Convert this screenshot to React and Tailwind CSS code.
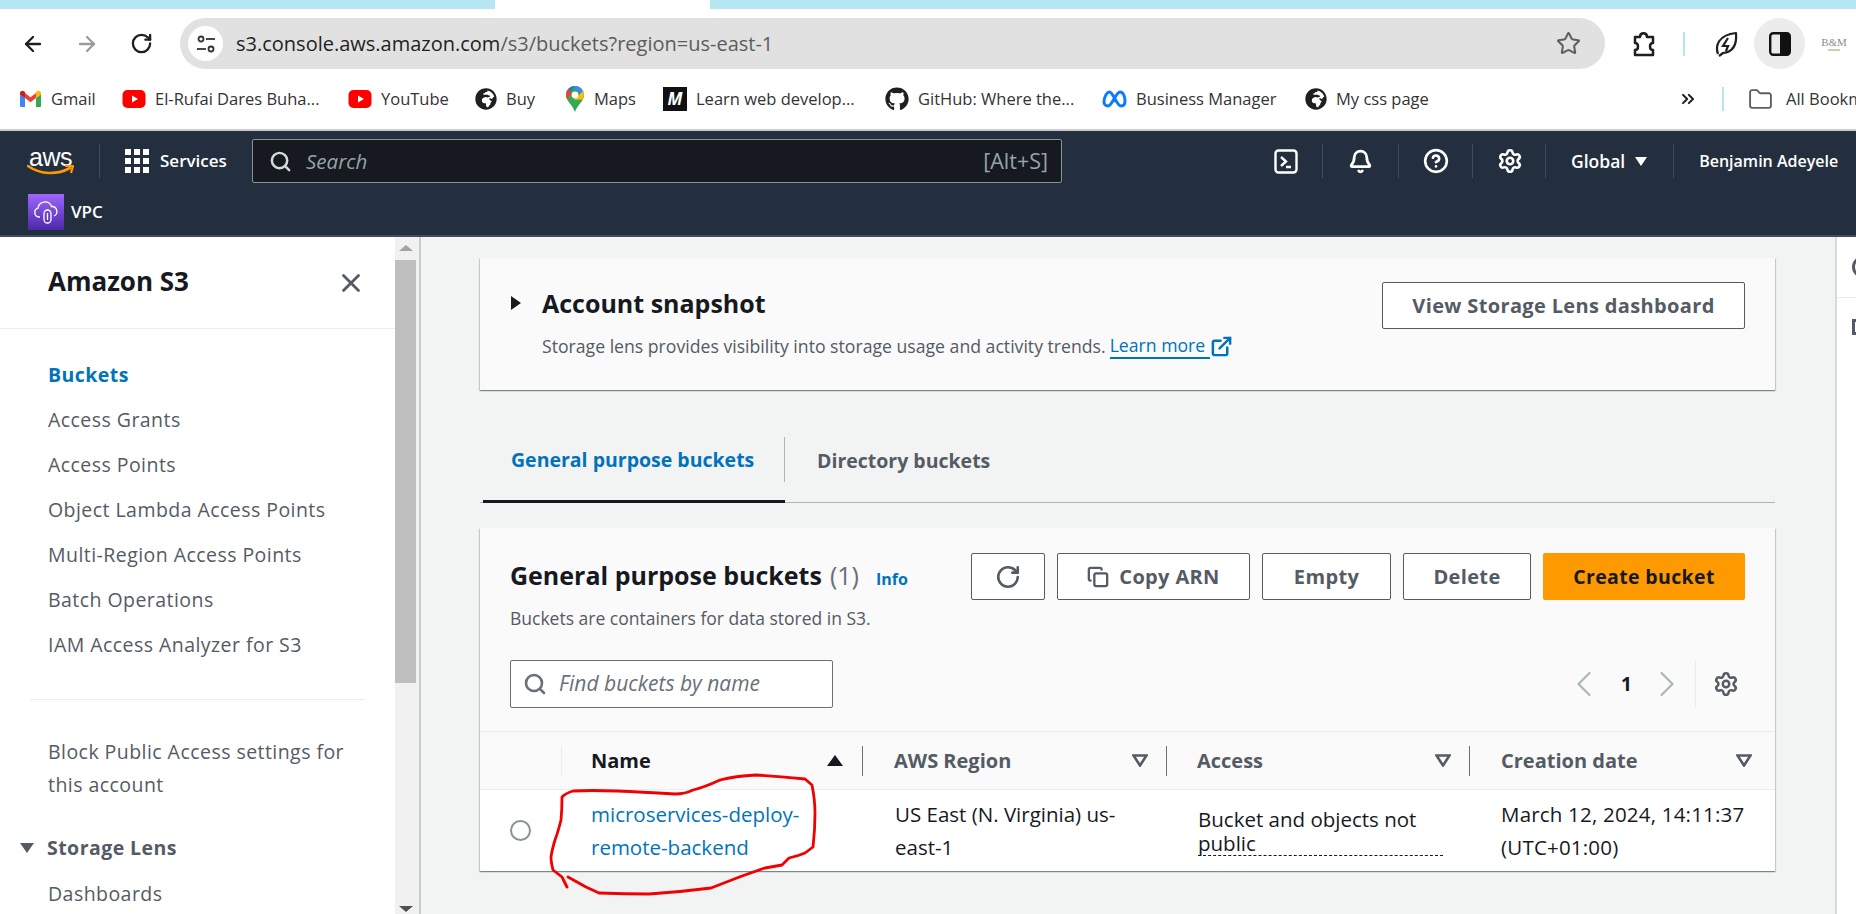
import React from "react";
import { ArrowLeft, ArrowRight, RotateCw, Star, Folder, ChevronsRight, Search, X, Copy, ChevronLeft, ChevronRight, Settings, CircleHelp, Bell, ExternalLink } from "lucide-react";
import { FaGithub, FaGlobeAfrica } from "react-icons/fa";

const Gmail = () => (
  <svg width="23" height="18" viewBox="0 0 23 18">
    <path d="M1 17V4l5 4v9H2a1 1 0 0 1-1-1z" fill="#4285f4" />
    <path d="M22 17V4l-5 4v9h4a1 1 0 0 0 1-1z" fill="#34a853" />
    <path d="M6 8v-5l5.500 4.200L17 3v5l-5.500 4.200z" fill="#ea4335" />
    <path d="M1 4.500V3c0-2 2.500-3 4-1.800L6 2v6z" fill="#c5221f" />
    <path d="M22 4.500V3c0-2-2.500-3-4-1.800L17 2v6z" fill="#fbbc04" />
  </svg>
);
const Yt = () => (
  <svg width="24" height="24" viewBox="0 0 24 24">
    <rect x="0.500" y="3" width="23" height="18" rx="5" fill="#f00" />
    <path d="M10 8.500l6 3.500-6 3.500z" fill="#fff" />
  </svg>
);
const Maps = () => (
  <svg width="20" height="28" viewBox="0 0 20 28">
    <path d="M10 1a9 9 0 0 1 9 9c0 6-6 9-9 17C7 19 1 16 1 10a9 9 0 0 1 9-9z" fill="#34a853" />
    <path d="M3 4a9 9 0 0 1 7-3l-5 6z" fill="#1a73e8" />
    <path d="M10 1a9 9 0 0 1 8 5l-5 4a3.500 3.500 0 0 0-3-5.500z" fill="#4285f4" />
    <path d="M1 10a9 9 0 0 1 2-6l4 4-5 6a8 8 0 0 1-1-4z" fill="#ea4335" />
    <path d="M18 6c1.500 3 1 6-.5 8.500L9 15l9-9z" fill="#fbbc04" />
    <circle cx="10" cy="10" r="3.400" fill="#fff" />
  </svg>
);
const Meta = () => (
  <svg width="26" height="18" viewBox="0 0 26 18" fill="none" stroke="#0a7cff" strokeWidth="3">
    <path d="M3 12c0-5 3-10 5.500-10C12 2 16 16 20 16c2.500 0 4-2 4-5 0-5-2-9-5-9-4 0-8 14-12 14-2.500 0-4-2-4-4z" />
  </svg>
);
const Bookmark = ({ w, ml, icon, children }) => (
  <div className="flex items-center shrink-0" style={{ width: w, marginLeft: ml }}>
    {icon}
    <span className="ml-[9px] whitespace-nowrap">{children}</span>
  </div>
);
const HeaderDivider = ({ ml }) => <div className="w-px h-[34px] bg-[#414d5c] shrink-0" style={{ marginLeft: ml }} />;
const NavItem = ({ children, active }) => (
  <div className={active ? "h-[45px] flex items-center text-[#0073bb] font-bold" : "h-[45px] flex items-center"}>{children}</div>
);
const Btn = ({ w, children, ml, className = "" }) => (
  <div className={"h-[47px] shrink-0 flex items-center justify-center gap-[10px] border border-[#545b64] rounded-[2px] bg-white text-[#545b64] font-bold text-[20px] tracking-[0.35px] " + className} style={{ width: w, marginLeft: ml }}>
    {children}
  </div>
);
const Filter = () => (
  <svg width="16" height="13" viewBox="0 0 16 13" className="shrink-0"><path d="M1.500 1.500h13L8 11.500z" fill="none" stroke="#545b64" strokeWidth="2.600" /></svg>
);
const Th = ({ w, children, last }) => (
  <div className="relative h-[30px] flex items-center justify-between shrink-0 text-[#545b64] font-bold text-[20px]" style={{ width: w }}>
    <span>{children}</span>
    <span className={last ? "pr-0" : "pr-[19px]"}><Filter /></span>
    {!last && <span className="absolute right-0 top-0 h-[30px] w-px bg-[#687078]" />}
  </div>
);

export default function App() {
  return (
    <div className="relative w-[1856px] h-[914px] overflow-hidden bg-white font-['Open_Sans',sans-serif] flex flex-col">
      {/* tab strip */}
      <div className="h-[9px] shrink-0 flex bg-[#b5e6f2]">
        <div className="w-[495px] shrink-0 rounded-br-[10px] bg-[#b5e6f2]" />
        <div className="w-[215px] shrink-0 bg-white" />
        <div className="flex-1 rounded-bl-[10px] bg-[#b5e6f2]" />
      </div>
      {/* toolbar */}
      <div className="h-[60px] shrink-0 flex items-end relative rounded-tl-[10px] bg-white">
        <div className="h-[51px] w-full flex items-center">
          <ArrowLeft size={24} strokeWidth={2.300} className="ml-[21px] text-[#1f1f1f] shrink-0" />
          <ArrowRight size={24} strokeWidth={2.300} className="ml-[30px] text-[#9b9b9b] shrink-0" />
          <RotateCw size={23} strokeWidth={2.400} className="ml-[31px] text-[#1f1f1f] shrink-0" />
          <div className="ml-[27px] w-[1425px] h-[51px] rounded-full bg-[#e1e1e1] flex items-center shrink-0">
            <div className="ml-[8px] w-[35px] h-[35px] rounded-full bg-white flex items-center justify-center shrink-0">
              <svg width="20" height="20" viewBox="0 0 20 20" fill="none" stroke="#333" strokeWidth="1.800">
                <circle cx="5" cy="5" r="2.500" /><path d="M10 5h9" />
                <circle cx="15" cy="15" r="2.500" /><path d="M1 15h9" />
              </svg>
            </div>
            <span className="ml-[13px] text-[20px] text-[#1f1f1f] whitespace-nowrap">s3.console.aws.amazon.com<span className="text-[#5c5c5c]">/s3/buckets?region=us-east-1</span></span>
            <Star size={25} strokeWidth={2} className="ml-auto mr-[24px] text-[#5f5f5f]" />
          </div>
          <svg width="26" height="26" viewBox="0 0 26 26" fill="none" stroke="#1f1f1f" strokeWidth="2.500" className="ml-[27px] shrink-0">
            <path d="M3 6h5c0-5 7-5 7 0h6v6c-4 0-4 7 0 7v5H3v-5c4 0 4-7 0-7z" strokeLinejoin="round" />
          </svg>
          <div className="ml-[25px] w-[2px] h-[24px] bg-[#b5e6f2] shrink-0" />
          <svg width="26" height="28" viewBox="0 0 26 28" fill="none" stroke="#1f1f1f" strokeWidth="2.200" className="ml-[28px] shrink-0">
            <path d="M5 24C2 16 5 5 23 3c1 12-3 19-13 20l-4 3" strokeLinejoin="round" />
            <path d="M15 8l-5 8h5l-2 5" />
          </svg>
          <div className="ml-[15px] w-[51px] h-[51px] rounded-full bg-[#ececec] flex items-center justify-center shrink-0">
            <svg width="22" height="24" viewBox="0 0 22 24"><rect x="1.200" y="1.200" width="19.600" height="21.600" rx="3" fill="none" stroke="#111" strokeWidth="2.400" /><rect x="11" y="2" width="9" height="20" fill="#111" /></svg>
          </div>
          <div className="ml-[16px] w-[26px] flex flex-col items-center shrink-0 leading-none">
            <span className="text-[11px] text-[#8a8a8a] whitespace-nowrap font-['Liberation_Serif',serif]">B&amp;M</span>
            <span className="mt-[1px] w-[12px] h-[2px] bg-[#d8c9a8]" />
          </div>
        </div>
      </div>
      {/* bookmarks */}
      <div className="h-[62px] shrink-0 flex items-center text-[16.500px] text-[#333] bg-white border-b-2 border-[#cccccc] overflow-hidden">
        <Bookmark w={77} ml={19} icon={<Gmail />}>Gmail</Bookmark>
        <Bookmark w={226} ml={26} icon={<Yt />}>El-Rufai Dares Buha...</Bookmark>
        <Bookmark w={102} ml={0} icon={<Yt />}>YouTube</Bookmark>
        <Bookmark w={61} ml={25} icon={<FaGlobeAfrica size={22} className="text-[#1f1f1f] shrink-0" />}>Buy</Bookmark>
        <Bookmark w={72} ml={29} icon={<Maps />}>Maps</Bookmark>
        <Bookmark w={197} ml={26} icon={<div className="w-[24px] h-[24px] bg-[#111] text-white italic font-bold text-[17px] leading-[24px] text-center shrink-0">M</div>}>Learn web develop...</Bookmark>
        <Bookmark w={193} ml={25} icon={<FaGithub size={24} className="text-[#1f1f1f] shrink-0" />}>GitHub: Where the...</Bookmark>
        <Bookmark w={178} ml={23} icon={<Meta />}>Business Manager</Bookmark>
        <Bookmark w={130} ml={26} icon={<FaGlobeAfrica size={22} className="text-[#1f1f1f] shrink-0" />}>My css page</Bookmark>
        <ChevronsRight size={20} strokeWidth={2.400} className="ml-[243px] text-[#1f1f1f] shrink-0" />
        <div className="ml-[24px] w-[2px] h-[24px] bg-[#b5e6f2] shrink-0" />
        <Folder size={25} strokeWidth={1.800} className="ml-[24px] text-[#5f5f5f] shrink-0" />
        <span className="ml-[13px] whitespace-nowrap">All Bookmarks</span>
      </div>
      {/* AWS header */}
      <div className="h-[106px] shrink-0 bg-[#232f3e] border-b-2 border-[#414d5c] text-white text-[17px]">
        <div className="h-[44px] mt-[8px] flex items-center">
          <div className="ml-[27px] w-[47px] h-[32px] relative shrink-0">
            <span className="block text-[25px] leading-[24px] tracking-[-0.500px] text-center font-['Liberation_Sans',sans-serif]">aws</span>
            <svg width="47" height="13" viewBox="0 0 47 13" className="absolute left-0 top-[19px]" fill="none">
              <path d="M1 2c13 9 29 9 42 2" stroke="#f90" strokeWidth="2.600" strokeLinecap="round" />
              <path d="M38 2h8l-2 7" stroke="#f90" strokeWidth="2.200" strokeLinejoin="round" />
            </svg>
          </div>
          <HeaderDivider ml={25} />
          <div className="ml-[25px] grid grid-cols-3 gap-[3px] shrink-0">
            {[0, 1, 2, 3, 4, 5, 6, 7, 8].map((i) => <span key={i} className="w-[6px] h-[6px] bg-white" />)}
          </div>
          <span className="ml-[11px] w-[67px] shrink-0 font-semibold whitespace-nowrap">Services</span>
          <div className="ml-[25px] w-[810px] h-[44px] shrink-0 bg-[#16191f] border border-[#879596] rounded-[2px] flex items-center">
            <Search size={23} strokeWidth={2.600} className="ml-[16px] text-[#d5dbdb]" />
            <span className="ml-[14px] italic text-[20.500px] text-[#95a5a6]">Search</span>
            <span className="ml-auto mr-[13px] text-[21.500px] text-[#95a5a6]">[Alt+S]</span>
          </div>
          <svg width="24" height="25" viewBox="0 0 24 25" fill="none" stroke="#fff" strokeWidth="2.400" className="ml-[212px] shrink-0">
            <rect x="1.500" y="1.500" width="21" height="22" rx="3" /><path d="M7 8l5 4.500-5 4.500M12 18h5" />
          </svg>
          <HeaderDivider ml={24} />
          <Bell size={25} strokeWidth={2.600} className="ml-[25px] shrink-0" />
          <HeaderDivider ml={25} />
          <CircleHelp size={26} strokeWidth={2.400} className="ml-[24px] shrink-0" />
          <HeaderDivider ml={23} />
          <Settings size={26} strokeWidth={2.400} className="ml-[24px] shrink-0" />
          <HeaderDivider ml={22} />
          <span className="ml-[25px] font-semibold text-[17.500px]">Global</span>
          <span className="ml-[10px] w-0 h-0 border-x-[6px] border-x-transparent border-t-[9px] border-t-white shrink-0" />
          <HeaderDivider ml={26} />
          <span className="ml-[25px] font-semibold text-[16px] whitespace-nowrap">Benjamin Adeyele</span>
        </div>
        <div className="mt-[11px] flex items-center">
          <div className="ml-[28px] w-[36px] h-[36px] bg-gradient-to-t from-[#4d27a8] to-[#a166ff] flex items-center justify-center shrink-0">
            <svg width="26" height="26" viewBox="0 0 26 26" fill="none" stroke="#fff" strokeWidth="1.300">
              <path d="M7 18H6a4.500 4.500 0 0 1-1-8.800A7 7 0 0 1 18.500 7.500 5 5 0 0 1 21 17" />
              <rect x="11" y="11" width="7" height="13" rx="3.500" /><path d="M14.500 14v7" />
            </svg>
          </div>
          <span className="ml-[7px] font-semibold">VPC</span>
        </div>
      </div>
      {/* body */}
      <div className="flex-1 min-h-0 flex">
        <aside className="w-[395px] shrink-0 bg-white text-[#545b64] text-[19.500px] tracking-[0.45px] overflow-hidden">
          <div className="h-[92px] flex items-center justify-between border-b border-[#eaeded]">
            <span className="ml-[48px] text-[#16191f] text-[26px] font-bold tracking-normal -mt-[2px]">Amazon S3</span>
            <X size={30} strokeWidth={2.200} className="mr-[29px]" />
          </div>
          <div className="pl-[48px] pt-[23px]">
            <NavItem active>Buckets</NavItem>
            <NavItem>Access Grants</NavItem>
            <NavItem>Access Points</NavItem>
            <NavItem>Object Lambda Access Points</NavItem>
            <NavItem>Multi-Region Access Points</NavItem>
            <NavItem>Batch Operations</NavItem>
            <NavItem>IAM Access Analyzer for S3</NavItem>
          </div>
          <div className="ml-[30px] w-[335px] h-px bg-[#eaeded] mt-[32px]" />
          <div className="ml-[48px] mt-[35px] leading-[33px] w-[320px]">Block Public Access settings for this account</div>
          <div className="mt-[30px] h-[33px] flex items-center font-bold">
            <span className="ml-[20px] w-0 h-0 border-x-[7px] border-x-transparent border-t-[10px] border-t-[#545b64]" />
            <span className="ml-[13px]">Storage Lens</span>
          </div>
          <div className="ml-[48px] mt-[13px] leading-[33px]">Dashboards</div>
        </aside>
        {/* scrollbar */}
        <div className="w-[26px] shrink-0 bg-[#f1f1f1] border-r-2 border-[#c9cccc] flex flex-col items-center pr-[3px]">
          <span className="mt-[8px] w-0 h-0 border-x-[7px] border-x-transparent border-b-[6px] border-b-[#a3a3a3]" />
          <div className="mt-[9px] w-[21px] h-[423px] bg-[#bfbfbf]" />
          <span className="mt-auto mb-[2px] w-0 h-0 border-x-[7px] border-x-transparent border-t-[6px] border-t-[#505050]" />
        </div>
        {/* main */}
        <main className="flex-1 min-w-0 bg-[#f2f3f3] pl-[59px] pr-[60px] pt-[21px] text-[#16191f]">
          <section className="h-[132px] bg-[#fafafa] shadow-[0_1px_1px_0_rgba(0,28,36,0.3),1px_1px_1px_0_rgba(0,28,36,0.15),-1px_1px_1px_0_rgba(0,28,36,0.15)] flex justify-between">
            <div className="flex">
              <span className="ml-[31px] mt-[38px] w-0 h-0 border-y-[7px] border-y-transparent border-l-[10px] border-l-[#16191f]" />
              <div className="ml-[21px] mt-[23px]">
                <div className="text-[25px] leading-[44px] font-bold">Account snapshot</div>
                <div className="mt-[8px] text-[17.650px] text-[#545b64] leading-[24px] whitespace-nowrap flex items-center">
                  <span>Storage lens provides visibility into storage usage and activity trends.</span>
                  <span className="ml-[4px] text-[#0073bb] border-b-2 border-[#0073bb]">Learn more&nbsp;</span>
                  <ExternalLink size={23} strokeWidth={2.600} className="text-[#0073bb]" />
                </div>
              </div>
            </div>
            <Btn w={363} className="mt-[24px] mr-[30px]">View Storage Lens dashboard</Btn>
          </section>
          <div className="h-[113px] border-b border-[#aab7b8] flex items-end">
            <div className="ml-[3px] w-[302px] h-[71px] border-b-[3px] border-[#16191f] text-[#0073bb] font-bold text-[19.500px] relative -mb-px flex items-center pl-[28px] pb-[12px]">
              General purpose buckets
              <span className="absolute right-0 top-[5px] h-[45px] w-px bg-[#aab7b8]" />
            </div>
            <div className="h-[71px] flex items-center pl-[32px] pb-[12px] text-[#545b64] font-bold text-[19.500px]">Directory buckets</div>
          </div>
          <section className="mt-[25px] bg-[#fafafa] shadow-[0_1px_1px_0_rgba(0,28,36,0.3),1px_1px_1px_0_rgba(0,28,36,0.15),-1px_1px_1px_0_rgba(0,28,36,0.15)]">
            <div className="h-[204px] border-b border-[#eaeded] pl-[30px] pr-[30px] pt-[25px]">
              <div className="flex items-start">
                <div className="w-[461px] shrink-0 flex items-baseline pt-[4px]">
                  <span className="text-[25px] font-bold whitespace-nowrap">General purpose buckets</span>
                  <span className="ml-[8px] text-[25px] text-[#687078]">(1)</span>
                  <span className="ml-[17px] text-[16px] font-bold text-[#0073bb]">Info</span>
                </div>
                <Btn w={74}><RotateCw size={26} strokeWidth={2.400} /></Btn>
                <Btn w={193} ml={12}><Copy size={22} strokeWidth={2.500} />Copy ARN</Btn>
                <Btn w={129} ml={12}>Empty</Btn>
                <Btn w={128} ml={12}>Delete</Btn>
                <div className="ml-[12px] w-[202px] h-[47px] shrink-0 flex items-center justify-center rounded-[2px] bg-[#ff9900] text-[#16191f] font-bold text-[19.500px] tracking-[0.35px]">Create bucket</div>
              </div>
              <div className="mt-[6px] text-[17.500px] leading-[24px] text-[#545b64]">Buckets are containers for data stored in S3.</div>
              <div className="mt-[30px] flex items-center">
                <div className="w-[323px] h-[48px] shrink-0 bg-white border border-[#687078] rounded-[2px] flex items-center">
                  <Search size={24} strokeWidth={2.600} className="ml-[12px] text-[#687078]" />
                  <span className="ml-[12px] italic text-[#687078] text-[21px] whitespace-nowrap">Find buckets by name</span>
                </div>
                <ChevronLeft size={44} strokeWidth={1.200} className="ml-[729px] text-[#aab7b8] shrink-0" />
                <span className="ml-[15px] w-[16px] font-bold text-[19px]">1</span>
                <ChevronRight size={44} strokeWidth={1.200} className="ml-[8px] text-[#aab7b8] shrink-0" />
                <span className="ml-[6px] w-px h-[48px] bg-[#eaeded] shrink-0" />
                <Settings size={26} strokeWidth={2.300} className="ml-[17px] text-[#545b64] shrink-0" />
              </div>
            </div>
            <div className="h-[58px] border-b border-[#eaeded] flex items-center">
              <span className="ml-[81px] w-px h-[30px] bg-[#eaeded]" />
              <div className="ml-[29px] w-[272px] h-[30px] relative flex items-center justify-between shrink-0 font-bold text-[20px]">
                <span>Name</span>
                <span className="mr-[20px] w-0 h-0 border-x-[8px] border-x-transparent border-b-[11px] border-b-[#16191f]" />
                <span className="absolute right-0 top-0 h-[30px] w-px bg-[#687078]" />
              </div>
              <div className="pl-[31px] flex">
                <Th w={273}>AWS Region</Th>
              </div>
              <div className="pl-[30px] flex">
                <Th w={273}>Access</Th>
              </div>
              <div className="pl-[31px] flex">
                <Th w={251} last>Creation date</Th>
              </div>
            </div>
            <div className="h-[81px] bg-white flex items-center text-[20.500px] leading-[33px]">
              <span className="ml-[30px] w-[21px] h-[21px] rounded-full border-2 border-[#879596] bg-white shrink-0" />
              <div className="ml-[60px] w-[304px] shrink-0 text-[#0073bb]">microservices-deploy-<br />remote-backend</div>
              <div className="w-[303px] shrink-0">US East (N. Virginia) us-<br />east-1</div>
              <div className="w-[303px] shrink-0">
                <span className="block w-[245px] leading-[24px] border-b border-dashed border-[#16191f] mt-[2px]">Bucket and objects not public</span>
              </div>
              <div className="whitespace-nowrap tracking-[0.2px]">March 12, 2024, 14:11:37<br />(UTC+01:00)</div>
            </div>
          </section>
        </main>
        {/* right rail */}
        <div className="w-[21px] shrink-0 bg-white border-l-2 border-[#d5dbdb] overflow-hidden">
          <div className="h-[61px] border-b border-[#eaeded] flex items-center pl-[15px]">
            <span className="w-[22px] h-[22px] shrink-0 rounded-full border-[3px] border-[#545b64]" />
          </div>
          <div className="mt-[21px] pl-[15px]"><span className="block w-[18px] h-[16px] border-[3px] border-[#545b64]" /></div>
        </div>
      </div>
      {/* red annotation */}
      <svg width="1856" height="914" viewBox="0 0 1856 914" className="absolute left-0 top-0 pointer-events-none" fill="none">
        <path d="M567 887L562 877L553 870C551 862 551 857 551 857C552 850 555 840 555 840C558 832 561 820 561 820C562 810 562 797 562 797C566 793 573 791 573 791C590 790 617 791 617 791C640 792 675 794 675 794C685 794 693 790 693 790C705 787 720 780 720 780C735 776 756 775 756 775C775 776 805 779 805 779L812 785C815 800 815 813 815 813C815 830 813 847 813 847L805 853C798 856 789 858 789 858L782 865L765 868L742 876L711 888C680 892 649 894 649 894C625 894 599 893 599 893L586 887L568 877" stroke="#f00000" strokeWidth="2.800" strokeLinejoin="round" strokeLinecap="round" />
      </svg>
    </div>
  );
}
